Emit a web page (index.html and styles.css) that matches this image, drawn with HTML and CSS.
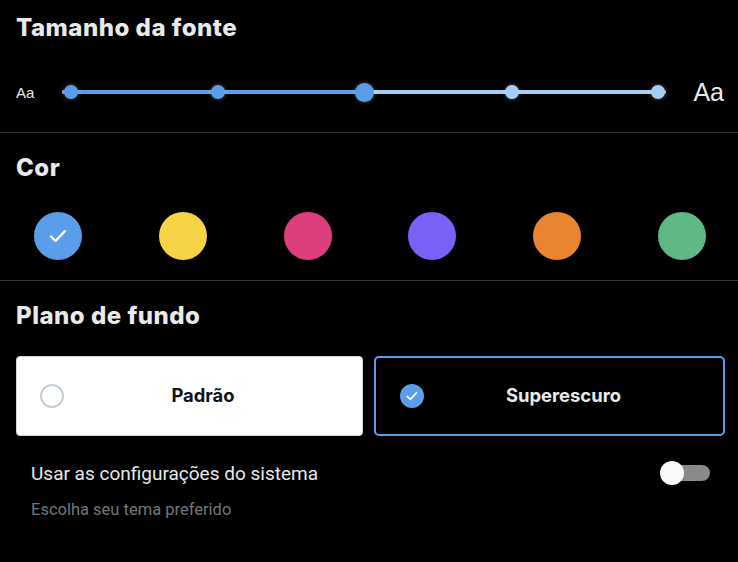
FILE: index.html
```html
<!DOCTYPE html>
<html lang="pt-BR">
<head>
<meta charset="utf-8">
<title>Exibição</title>
<link rel="stylesheet" href="styles.css">
</head>
<body>
<section class="section section-font">
  <h2 class="title">Tamanho da fonte</h2>
  <div class="slider-row">
    <span class="aa-small">Aa</span>
    <div class="slider">
      <div class="track"><div class="track-fill"></div></div>
      <div class="dots">
        <span class="dot"></span>
        <span class="dot"></span>
        <span class="dot dot-active"></span>
        <span class="dot dot-light"></span>
        <span class="dot dot-light"></span>
      </div>
    </div>
    <span class="aa-large">Aa</span>
  </div>
</section>
<section class="section section-color">
  <h2 class="title">Cor</h2>
  <div class="swatches">
    <span class="swatch swatch-blue">
      <svg viewBox="0 0 24 24" width="24" height="24"><path d="M5 12.5l4.5 4.5L19 7" fill="none" stroke="#fff" stroke-width="2.4" stroke-linecap="round" stroke-linejoin="round"/></svg>
    </span>
    <span class="swatch swatch-yellow"></span>
    <span class="swatch swatch-pink"></span>
    <span class="swatch swatch-purple"></span>
    <span class="swatch swatch-orange"></span>
    <span class="swatch swatch-green"></span>
  </div>
</section>
<section class="section section-bg">
  <h2 class="title">Plano de fundo</h2>
  <div class="cards">
    <div class="card card-light">
      <span class="radio"></span>
      <span class="card-label">Padrão</span>
    </div>
    <div class="card card-dark">
      <span class="radio radio-checked">
        <svg viewBox="0 0 24 24" width="16" height="16"><path d="M5 12.5l4.5 4.5L19 7" fill="none" stroke="#fff" stroke-width="2.4" stroke-linecap="round" stroke-linejoin="round"/></svg>
      </span>
      <span class="card-label">Superescuro</span>
    </div>
  </div>
  <div class="system-row">
    <span class="system-label">Usar as configurações do sistema</span>
    <span class="toggle"><span class="toggle-knob"></span></span>
  </div>
  <p class="hint">Escolha seu tema preferido</p>
</section>
</body>
</html>
```
FILE: styles.css
```css
html, body {
  margin: 0;
  padding: 0;
  background: #000;
}
body {
  width: 738px;
  height: 562px;
  overflow: hidden;
  font-family: "Liberation Sans", Arial, sans-serif;
  color: #e7e9ea;
}
.section {
  padding: 0 16px;
}
.section-font {
  padding-top: 12px;
  padding-right: 14px;
  padding-bottom: 20px;
  border-bottom: 1px solid #2f3336;
}
.section-color {
  padding-top: 19px;
  padding-bottom: 20px;
  border-bottom: 1px solid #2f3336;
}
.section-bg {
  padding-top: 19px;
}
.title {
  margin: 0;
  font-family: Inter, "Liberation Sans", sans-serif;
  font-size: 24px;
  letter-spacing: 0.5px;
  line-height: 32px;
  font-weight: 800;
  color: #e7e9ea;
}
.slider-row {
  margin-top: 28px;
  height: 40px;
  display: flex;
  align-items: center;
}
.aa-small {
  width: 46px;
  font-size: 15px;
  color: #e7e9ea;
}
.aa-large {
  margin-left: 27px;
  font-size: 25px;
  color: #e7e9ea;
}
.slider {
  flex: 1;
  position: relative;
  height: 20px;
  display: flex;
  align-items: center;
}
.track {
  width: 100%;
  height: 4px;
  border-radius: 2px;
  background: #a5cdf5;
  overflow: hidden;
}
.track-fill {
  width: 50%;
  height: 100%;
  background: #5b9de9;
}
.dots {
  position: absolute;
  left: 0;
  right: 0;
  top: 0;
  bottom: 0;
  padding: 0 1px 0 2px;
  display: flex;
  justify-content: space-between;
  align-items: center;
}
.dot {
  width: 14px;
  height: 14px;
  border-radius: 50%;
  background: #5b9de9;
  box-shadow: 0 0 4px rgba(255, 255, 255, 0.35);
}
.dot-active {
  width: 19px;
  height: 19px;
  margin: 0 -2px;
}
.dot-light {
  background: #a5cdf5;
}
.swatches {
  margin-top: 28px;
  display: flex;
  justify-content: space-between;
  padding: 0 16px 0 18px;
}
.swatch {
  width: 48px;
  height: 48px;
  border-radius: 50%;
  display: flex;
  align-items: center;
  justify-content: center;
}
.swatch-blue { background: #5b9de9; }
.swatch-yellow { background: #f5d446; }
.swatch-pink { background: #dd3e7e; }
.swatch-purple { background: #7a62f8; }
.swatch-orange { background: #e98430; }
.swatch-green { background: #5fb886; }
.cards {
  margin-top: 24px;
  display: grid;
  grid-template-columns: 347px 351px;
  gap: 11px;
}
.card {
  height: 80px;
  box-sizing: border-box;
  border-radius: 4px;
  display: flex;
  align-items: center;
  padding: 0 20px 0 23px;
}
.card-light {
  background: #fff;
  border: 1px solid #cfd9de;
}
.card-dark {
  background: #000;
  border: 2px solid #5b9de9;
  border-radius: 5px;
  padding-left: 24px;
}
.radio {
  width: 24px;
  height: 24px;
  box-sizing: border-box;
  border-radius: 50%;
  border: 2px solid #c4cfd6;
  display: flex;
  align-items: center;
  justify-content: center;
}
.radio-checked {
  background: #5b9de9;
  border: none;
}
.card-label {
  flex: 1;
  text-align: center;
  font-family: Inter, "Liberation Sans", sans-serif;
  font-size: 18.4px;
  line-height: 22px;
  font-weight: 700;
  margin-top: -2px;
}
.card-light .card-label { color: #0f1419; }
.card-dark .card-label { color: #e7e9ea; }
.system-row {
  margin-top: 17px;
  height: 40px;
  padding: 0 12px 0 15px;
  display: flex;
  align-items: center;
  justify-content: space-between;
}
.system-label {
  font-family: Roboto, "Liberation Sans", sans-serif;
  font-size: 19px;
  color: #e7e9ea;
}
.toggle {
  position: relative;
  width: 50px;
  height: 24px;
  display: flex;
  align-items: center;
  justify-content: flex-end;
}
.toggle::before {
  content: "";
  width: 40px;
  height: 16px;
  border-radius: 8px;
  background: #8a8a8a;
}
.toggle-knob {
  position: absolute;
  left: 0;
  top: 0;
  width: 24px;
  height: 24px;
  border-radius: 50%;
  background: #fafafa;
}
.hint {
  margin: 7px 0 0;
  padding-left: 15px;
  line-height: 20px;
  font-family: Roboto, "Liberation Sans", sans-serif;
  font-size: 16.5px;
  color: #71767b;
}
```
